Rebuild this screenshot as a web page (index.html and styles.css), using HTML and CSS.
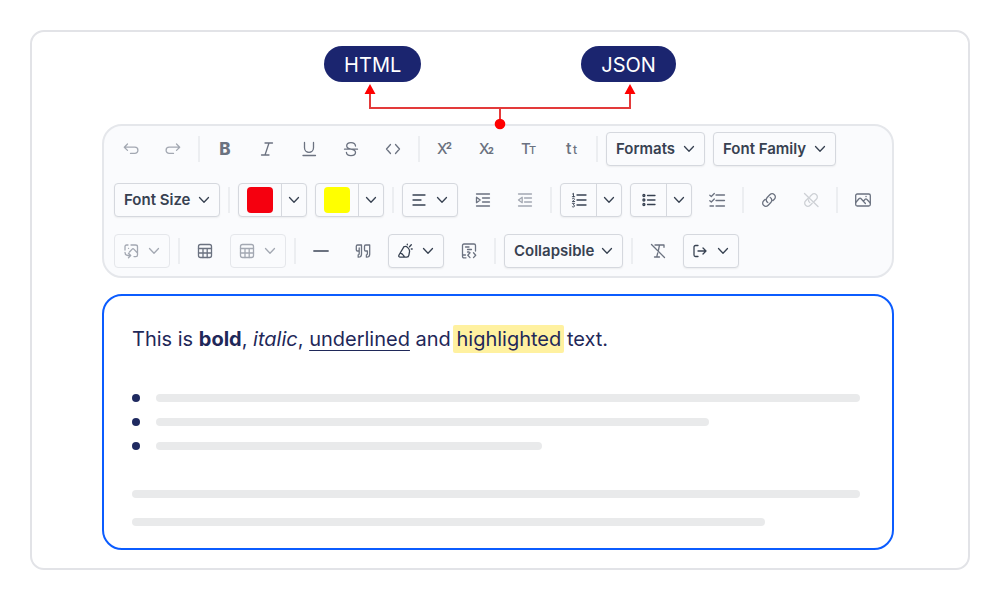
FILE: index.html
```
<!DOCTYPE html>
<html lang="en">
<head>
  <meta charset="UTF-8" />
  <meta name="viewport" content="width=device-width, initial-scale=1.0"/>
  <title>Rich Text Editor: HTML and JSON output</title>
  <link rel="stylesheet" href="styles.css">
</head>
<body>
  <svg class="sprite" aria-hidden="true">
    <symbol id="chevron" viewBox="0 0 12 12"><path d="M1.500 3.500 6 8.200l4.500-4.700"/></symbol>
    <symbol id="table" viewBox="0 0 20 20"><rect x="3.500" y="3.500" width="13" height="13" rx="2"/><path d="M3.500 7.500h13M3.500 12h13M8 7.500v9M12.200 7.500v9"/></symbol>
  </svg>

  <main class="frame">
    <div class="outputs">
      <span class="pill">HTML</span>
      <span class="pill">JSON</span>
    </div>
    <svg class="connector" width="276" height="46" viewBox="0 0 276 46" aria-hidden="true">
      <path class="wire" d="M8 8v16h260V8M138 24v16"/>
      <path class="tip" d="M8 0l5.500 10h-11zM268 0l5.500 10h-11z"/>
      <circle class="tip" cx="138" cy="40" r="5.300"/>
    </svg>

    <div class="toolbar" role="toolbar" aria-label="Formatting">
      <button class="tool muted" aria-label="Undo"><svg class="icon" viewBox="0 0 20 20"><path d="M6.500 5 3.300 8.200l3.200 3.200M3.500 8.200h10.300a3.100 3.100 0 0 1 0 6.200H9.500"/></svg></button>
      <button class="tool muted" aria-label="Redo"><svg class="icon" viewBox="0 0 20 20"><path d="M13.500 5l3.200 3.200-3.200 3.200M16.500 8.200H6.200a3.100 3.100 0 0 0 0 6.200h4.300"/></svg></button>
      <span class="sep"></span>
      <button class="tool" aria-label="Bold"><svg class="icon" viewBox="0 0 20 20"><text class="heavy" x="10" y="16" font-size="17" text-anchor="middle">B</text></svg></button>
      <button class="tool" aria-label="Italic"><svg class="icon" viewBox="0 0 20 20"><path d="M8 4h7.500M4.500 16H12M12 4 8 16"/></svg></button>
      <button class="tool" aria-label="Underline"><svg class="icon" viewBox="0 0 20 20"><path d="M5.500 3.500v5.300a4.500 4.500 0 0 0 9 0V3.500M4 16.500h12.500"/></svg></button>
      <button class="tool" aria-label="Strikethrough"><svg class="icon" viewBox="0 0 20 20"><path d="M14.500 7C14.300 4.800 12.600 3.600 10 3.600S5.700 4.800 5.700 6.800 7.500 9.700 10 10.200s4.500 1.200 4.500 3.100-1.800 3.300-4.500 3.300-4.500-1.300-4.600-3.300M3.500 10.200h13"/></svg></button>
      <button class="tool" aria-label="Code"><svg class="icon" viewBox="0 0 20 20"><path d="M7.500 5.500 3.500 10l4 4.500M12.500 5.500l4 4.500-4 4.500"/></svg></button>
      <span class="sep"></span>
      <button class="tool" aria-label="Superscript"><svg class="icon" viewBox="0 0 20 20"><text x="2" y="15" font-size="15">X</text><text class="heavy" x="11" y="10" font-size="9">2</text></svg></button>
      <button class="tool" aria-label="Subscript"><svg class="icon" viewBox="0 0 20 20"><text x="2" y="15" font-size="15">X</text><text class="heavy" x="11" y="15" font-size="9">2</text></svg></button>
      <button class="tool" aria-label="Uppercase"><svg class="icon" viewBox="0 0 20 20"><text x="2" y="15" font-size="15">T</text><text x="10" y="15" font-size="11">T</text></svg></button>
      <button class="tool" aria-label="Lowercase"><svg class="icon" viewBox="0 0 20 20"><text x="5" y="15" font-size="16">t</text><text x="12" y="15" font-size="12">t</text></svg></button>
      <span class="sep"></span>
      <select class="drop" aria-label="Formats"><option>Formats</option></select>
      <select class="drop" aria-label="Font Family"><option>Font Family</option></select>

      <select class="drop" aria-label="Font Size"><option>Font Size</option></select>
      <span class="sep"></span>
      <div class="split">
        <button class="main wide" aria-label="Text color"><span class="swatch red"></span></button>
        <button class="more" aria-label="More text colors"><svg class="chevron"><use href="#chevron"/></svg></button>
      </div>
      <div class="split">
        <button class="main wide" aria-label="Background color"><span class="swatch yellow"></span></button>
        <button class="more" aria-label="More background colors"><svg class="chevron"><use href="#chevron"/></svg></button>
      </div>
      <span class="sep"></span>
      <button class="menu" aria-label="Align"><svg class="icon" viewBox="0 0 20 20"><path d="M4 5h12M4 10h8M4 15h12"/></svg><svg class="chevron"><use href="#chevron"/></svg></button>
      <button class="tool" aria-label="Indent"><svg class="icon" viewBox="0 0 20 20"><path d="M3.500 4h13M9.500 8h7M9.500 12h7M3.500 16h13M3.500 7.300v5.400L7.200 10z"/></svg></button>
      <button class="tool muted" aria-label="Outdent"><svg class="icon" viewBox="0 0 20 20"><path d="M3.500 4h13M9.500 8h7M9.500 12h7M3.500 16h13M7.200 7.300v5.400L3.500 10z"/></svg></button>
      <span class="sep"></span>
      <div class="split">
        <button class="main" aria-label="Numbered list"><svg class="icon" viewBox="0 0 20 20"><path d="M8 5h9M8 10h9M8 15h9"/><path class="thin" d="M3.500 4l1-.7v3.400M3.300 6.700h2.400M3.300 8.800c.6-.8 2.200-.6 2.200.4 0 .8-1 1.200-2.200 2.300h2.400M3.300 13.300h2.200l-1.200 1.500c1.600 0 1.700 2.200 0 2.200-.5 0-.8-.2-1.100-.5"/></svg></button>
        <button class="more" aria-label="More numbered lists"><svg class="chevron"><use href="#chevron"/></svg></button>
      </div>
      <div class="split">
        <button class="main" aria-label="Bullet list"><svg class="icon" viewBox="0 0 20 20"><path d="M8.500 5.500H16M8.500 10H16M8.500 14.500H16"/><circle cx="4.900" cy="5.500" r="1"/><circle cx="4.900" cy="10" r="1"/><circle cx="4.900" cy="14.500" r="1"/></svg></button>
        <button class="more" aria-label="More bullet lists"><svg class="chevron"><use href="#chevron"/></svg></button>
      </div>
      <button class="tool" aria-label="Checklist"><svg class="icon" viewBox="0 0 20 20"><path d="M9 5h8.500M9 10.500h8.500M9 16h8.500M3 16h3.500M2.800 5.200 4.300 6.500l3-3M2.800 10.700 4.300 12l3-3"/></svg></button>
      <span class="sep"></span>
      <button class="tool" aria-label="Insert link"><svg class="icon" viewBox="0 0 20 20"><path d="M8.800 12.500c-2-1.300-2-3.500-.6-5l2.600-2.700c1.400-1.400 3.300-1.300 4.600-.1s1.200 3.200-.1 4.500l-1.300 1.300M11.200 7.500c2 1.300 2 3.500.6 5l-2.600 2.700c-1.400 1.400-3.300 1.300-4.600.1s-1.200-3.200.1-4.500l1.300-1.300"/></svg></button>
      <button class="tool faint" aria-label="Remove link"><svg class="icon" viewBox="0 0 20 20"><path d="M9 6.500l1.800-1.700c1.400-1.400 3.300-1.300 4.600-.1s1.200 3.200-.1 4.500l-2 2M11.200 13.200l-2 2c-1.400 1.400-3.300 1.300-4.600.1s-1.200-3.200.1-4.500l2.500-2.500c.5-.5 1-.7 1.500-.7M7.500 10c0 1 .5 2 1.300 2.500M3.500 3.500l13.500 13"/></svg></button>
      <span class="sep"></span>
      <button class="tool" aria-label="Insert image"><svg class="icon" viewBox="0 0 20 20"><rect x="2.700" y="4" width="14.600" height="12" rx="1.500"/><path d="M2.700 12.500l3.500-4c.6-.6 1.200-.6 1.700 0l4.500 5M10.500 11l1.700-1.700c.5-.5 1-.5 1.500 0l3.600 3.700M13 6.500h.1"/></svg></button>

      <button class="menu disabled" aria-label="Edit image" disabled><svg class="icon" viewBox="0 0 20 20"><path d="M4 9V5.500C4 4.500 4.600 4 5.500 4H7M10 4h4.500c1.200 0 2 .6 2 1.700V14c0 1-.6 1.600-1.600 1.600H13M8.500 11l2.700-2.900c.5-.5 1.100-.5 1.600 0l3.700 3.900M4 11.500c0 2 1 3 3 3h2.500M7.500 12.300l2.200 2.200-2.200 2.200M7.500 7.300h.1"/></svg><svg class="chevron"><use href="#chevron"/></svg></button>
      <span class="sep"></span>
      <button class="tool" aria-label="Insert table"><svg class="icon"><use href="#table"/></svg></button>
      <button class="menu disabled" aria-label="Edit table" disabled><svg class="icon"><use href="#table"/></svg><svg class="chevron"><use href="#chevron"/></svg></button>
      <span class="sep"></span>
      <button class="tool" aria-label="Horizontal line"><svg class="icon" viewBox="0 0 20 20"><path class="thick" d="M3 10h14"/></svg></button>
      <button class="tool" aria-label="Quote"><svg class="icon" viewBox="0 0 20 20"><path d="M8.500 4H4.500c-.8 0-1.200.4-1.200 1.200v3.600c0 .8.400 1.200 1.200 1.200h1.700M6.200 7v3M8.500 4v9c0 2-1 3.200-3.300 3.200v-2.400c.7 0 1-.4 1-1V10M16.700 4h-4c-.8 0-1.200.4-1.200 1.200v3.600c0 .8.400 1.200 1.200 1.200h1.700M16.700 4v9c0 2-1 3.200-3.300 3.200v-2.400c.7 0 1-.4 1-1V10"/></svg></button>
      <button class="menu" aria-label="Clean up"><svg class="icon" viewBox="0 0 20 20"><path d="M9 5.700 4 14c-.6 1.200-.1 2.200 1.200 2.200h6.500c1.300 0 2-.7 2.200-2l.6-3.400M9 5.700c1.200-.7 2.500-.4 3.800.9s2 2.700 1.700 4.200M5.500 12c1.800.2 2.600 2 4 4M12.300 3.800v-.6M14.500 5.800l1.800-2M16.300 8h.9"/></svg><svg class="chevron"><use href="#chevron"/></svg></button>
      <button class="tool" aria-label="Code block"><svg class="icon" viewBox="0 0 20 20"><path d="M7 16.800H5c-1 0-1.500-.5-1.500-1.500V4.500c0-1 .5-1.500 1.500-1.500h10c1 0 1.500.5 1.500 1.500V10M3.500 14h3M6.500 6h3.500M8.500 8.500h4M8.500 11h1.500M11 11.800l-2.200 2.400 2.200 2.400M14.500 11.800l2.200 2.400-2.200 2.400"/></svg></button>
      <span class="sep"></span>
      <button class="drop">Collapsible</button>
      <span class="sep"></span>
      <button class="tool" aria-label="Clear formatting"><svg class="icon" viewBox="0 0 20 20"><path d="M3.500 3.500l13 13M7 4h9v2.300M11.500 4l-1 5M9.700 12l-1 4M6.500 16h5"/></svg></button>
      <button class="menu" aria-label="Export"><svg class="icon" viewBox="0 0 20 20"><path d="M8 4.500H5.500C4.600 4.500 4 5 4 6v8c0 1 .6 1.500 1.500 1.500H8M8 10h8M13 7l3 3-3 3"/></svg><svg class="chevron"><use href="#chevron"/></svg></button>
    </div>

    <section class="editor">
      <p class="sample">This is <strong>bold</strong>, <em>italic</em>, <u>underlined</u> and <mark>highlighted</mark> text.</p>
      <ul class="lines">
        <li><span class="bar"></span></li>
        <li><span class="bar medium"></span></li>
        <li><span class="bar short"></span></li>
      </ul>
      <div class="paragraph">
        <span class="bar"></span>
        <span class="bar long"></span>
      </div>
    </section>
  </main>
</body>
</html>
```
FILE: styles.css
```
* {
  box-sizing: border-box;
}
body {
  margin: 0;
  background: #fff;
  font-family: Inter, "Liberation Sans", sans-serif;
  color: #1f2859;
}
.sprite {
  position: absolute;
  width: 0;
  height: 0;
}
.frame {
  margin: 30px;
  padding: 14px 70px 18px;
  border: 2px solid #e2e3e7;
  border-radius: 14px;
}

/* Output formats */
.outputs {
  display: flex;
  justify-content: center;
  gap: 160px;
}
.pill {
  padding: 2px 20px 0;
  border-radius: 18px;
  background: #1b256f;
  color: #fff;
  font-size: 20px;
  line-height: 34px;
}
.connector {
  display: block;
  position: relative; /* keeps the dot above the toolbar border */
  margin: 2px auto -6px;
}
.wire {
  fill: none;
  stroke: #e33a3a;
  stroke-width: 2;
}
.tip {
  fill: #ff0000;
}

/* Toolbar */
.toolbar {
  display: flex;
  flex-wrap: wrap;
  align-items: center;
  gap: 17px 8px;
  margin-right: 4px;
  padding: 6px 10px 8px;
  border: 2px solid #e5e7eb;
  border-radius: 20px;
  background: #fafbfd;
}
button, select {
  margin: 0;
  padding: 0;
  border: none;
  background: transparent;
  color: #374151;
  font-family: inherit;
  cursor: pointer;
}
.tool, .menu, .main, .more {
  display: flex;
  align-items: center;
  justify-content: center;
}
.tool {
  width: 34px;
  height: 34px;
  color: #6b7280;
}
.muted {
  color: #a3a8b2;
}
.faint {
  color: #cdd0d5;
}
.sep {
  width: 2px;
  height: 26px;
  background: #eceef1;
}
.menu, .drop, .split {
  height: 34px;
  border: 1px solid #d5d8de;
  border-radius: 4px;
  background-color: #fafbfd;
  box-shadow: 0 1px 2px rgba(0, 0, 0, 0.06);
}
.menu {
  justify-content: flex-start;
  gap: 7px;
  width: 56px;
  padding-left: 6px;
}
.disabled {
  border-color: #e5e7eb;
  color: #a3a8b2;
  box-shadow: none;
}
.drop {
  appearance: none;
  padding: 0 28px 2px 9px;
  background-image: url("data:image/svg+xml,%3Csvg xmlns='http://www.w3.org/2000/svg' viewBox='0 0 12 12' fill='none' stroke='%23374151' stroke-width='1.3' stroke-linecap='round' stroke-linejoin='round'%3E%3Cpath d='M1.5 3.5 6 8.2l4.5-4.7'/%3E%3C/svg%3E");
  background-repeat: no-repeat;
  background-position: right 9px center;
  background-size: 12px 12px;
  font-size: 15px;
  font-weight: 600;
}
.split {
  display: flex;
}
.main {
  width: 36px;
  border-right: 1px solid #d5d8de;
}
.main.wide {
  width: 43px;
}
.more {
  width: 24px;
}
.swatch {
  width: 26px;
  height: 26px;
  border-radius: 4px;
}
.red {
  background: #f5000f;
}
.yellow {
  background: #ffff00;
}
.icon, .chevron {
  flex: none;
  fill: none;
  stroke: currentColor;
  stroke-width: 1.3;
  stroke-linecap: round;
  stroke-linejoin: round;
}
.icon {
  width: 20px;
  height: 20px;
}
.icon text {
  fill: currentColor;
  stroke: none;
  font-weight: 500;
}
.icon .heavy {
  font-weight: 800;
}
.icon .thin {
  stroke-width: 0.9;
}
.icon .thick {
  stroke-width: 1.8;
}
.chevron {
  width: 12px;
  height: 12px;
}

/* Editor */
.editor {
  margin: 16px 4px 0 0;
  padding: 29px 32px 22px 28px;
  border: 2px solid #0b5cff;
  border-radius: 20px;
}
.sample {
  margin: 0;
  font-size: 20px;
  line-height: 28px;
}
u {
  text-underline-offset: 4px;
  text-decoration-thickness: 1px;
}
mark {
  margin: 0 -3px;
  padding: 2px 3px;
  border-radius: 2px;
  background: #fff1a0;
  color: inherit;
}
.lines {
  display: grid;
  gap: 16px;
  margin: 41px 0 40px;
  padding: 0;
  list-style: none;
}
.lines li {
  display: flex;
  gap: 16px;
}
.lines li::before {
  content: "";
  flex: none;
  width: 8px;
  height: 8px;
  border-radius: 50%;
  background: #1f2a60;
}
.paragraph {
  display: grid;
  gap: 20px;
}
.bar {
  width: 100%;
  height: 8px;
  border-radius: 4px;
  background: #e9eaeb;
}
.bar.long {
  width: 87%;
}
.bar.medium {
  width: 76%;
}
.bar.short {
  width: 53%;
}
```
